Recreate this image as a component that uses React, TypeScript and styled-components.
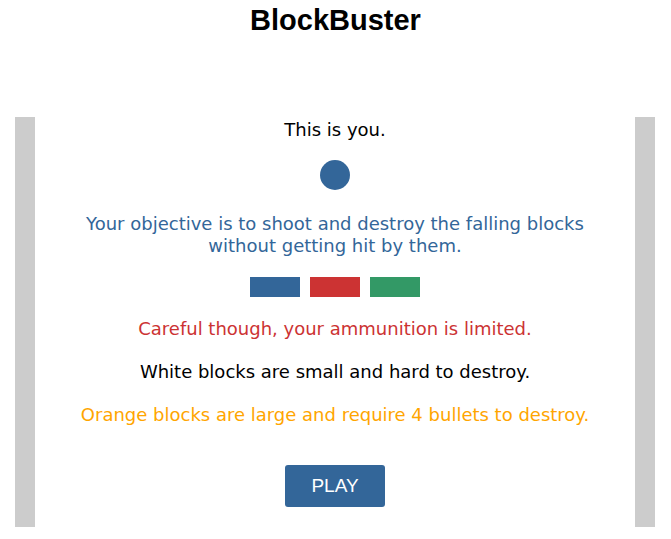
import React from 'react'
import styled, { createGlobalStyle } from 'styled-components'

const GlobalStyle = createGlobalStyle`
  html, body {
    margin: 0;
    padding: 0;
    background: #ffffff;
  }
  body {
    font-family: "DejaVu Sans", Verdana, sans-serif;
  }
`;

const blocks = ['#336699', '#cc3333', '#339966'];

const App: React.FC = () => {
  return (
    <>
      <GlobalStyle />
      <Page>
        <Title>BlockBuster</Title>
        <Stage>
          <Wall />
          <Intro>
            <Line>This is you.</Line>
            <Player />
            <Line color="#336699" $wide>
              Your objective is to shoot and destroy the falling blocks without getting hit by them.
            </Line>
            <BlockRow>
              {blocks.map(c => (
                <Block key={c} color={c} />
              ))}
            </BlockRow>
            <Line color="#cc3333">Careful though, your ammunition is limited.</Line>
            <Line>White blocks are small and hard to destroy.</Line>
            <Line color="#ffa500">Orange blocks are large and require 4 bullets to destroy.</Line>
            <PlayButton>PLAY</PlayButton>
          </Intro>
          <Wall />
        </Stage>
      </Page>
    </>
  )
}

const Page = styled.div`
  width: 671px;
  height: 539px;
  display: flex;
  flex-direction: column;
  align-items: center;
`;

const Title = styled.h1`
  margin: 0;
  height: 117px;
  padding-top: 2px;
  box-sizing: border-box;
  font-family: "Liberation Sans", Arial, sans-serif;
  font-size: 29px;
  line-height: 36px;
  font-weight: bold;
  color: #000;
`;

const Stage = styled.div`
  align-self: flex-start;
  margin-left: 15px;
  width: 640px;
  height: 410px;
  display: flex;
`;

const Wall = styled.div`
  width: 20px;
  background: #cccccc;
`;

const Intro = styled.div`
  flex: 1;
  display: flex;
  flex-direction: column;
  align-items: center;
  padding-top: 2px;
`;

const Line = styled.p<{ color?: string; $wide?: boolean }>`
  margin: 0 0 ${p => (p.$wide ? '20px' : '21px')};
  max-width: ${p => (p.$wide ? '540px' : 'none')};
  font-size: 18px;
  line-height: 22px;
  text-align: center;
  white-space: ${p => (p.$wide ? 'normal' : 'nowrap')};
  color: ${p => p.color || '#000'};
`;

const Player = styled.div`
  width: 30px;
  height: 30px;
  border-radius: 50%;
  background: #336699;
  margin: -2px 0 23px;
`;

const BlockRow = styled.div`
  display: flex;
  gap: 10px;
  margin-bottom: 21px;
`;

const Block = styled.div<{ color: string }>`
  width: 50px;
  height: 20px;
  background: ${p => p.color};
`;

const PlayButton = styled.button`
  margin-top: 18px;
  width: 100px;
  height: 42px;
  border: none;
  border-radius: 3px;
  background: #336699;
  color: #ffffff;
  font-family: "Liberation Sans", Arial, sans-serif;
  font-size: 19px;
  cursor: pointer;
`;

export default App
